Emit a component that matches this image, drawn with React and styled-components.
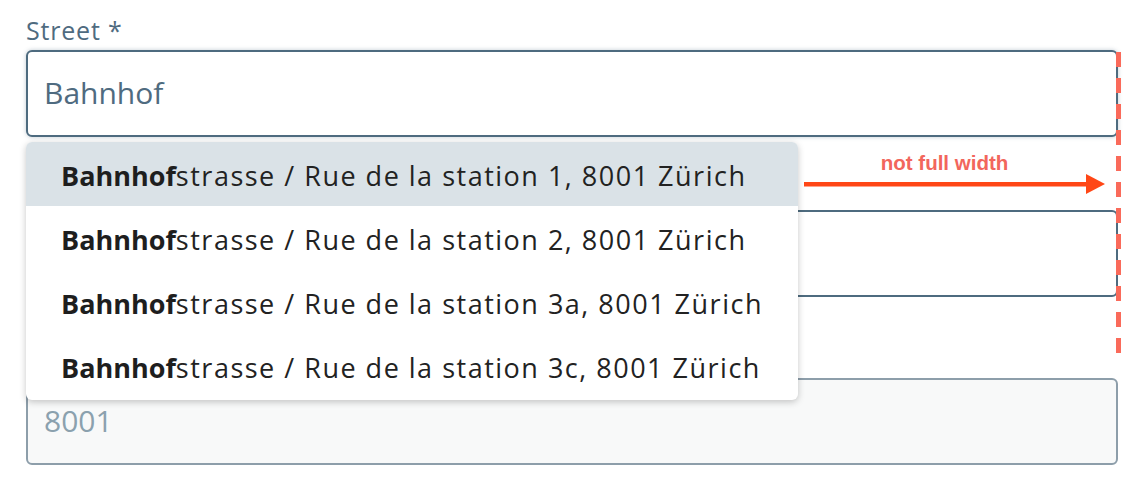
import React from "react"
import styled, { createGlobalStyle } from "styled-components"

const GlobalStyle = createGlobalStyle`
  html, body {
    margin: 0;
    padding: 0;
    background: #ffffff;
  }
  body {
    font-family: "Open Sans", Lato, sans-serif;
  }
`

const suggestions = [
  "strasse / Rue de la station 1, 8001 Zürich",
  "strasse / Rue de la station 2, 8001 Zürich",
  "strasse / Rue de la station 3a, 8001 Zürich",
  "strasse / Rue de la station 3c, 8001 Zürich",
]

const query = "Bahnhof"

const App = () => {
  return (
    <>
      <GlobalStyle />
      <Page>
        <Form>
          <Field>
            <Label>Street *</Label>
            <Input value={query} readOnly focused />
            <Dropdown>
              {suggestions.map((rest, i) => (
                <Option key={rest} active={i === 0}>
                  <b>{query}</b>
                  <span>{rest}</span>
                </Option>
              ))}
            </Dropdown>
          </Field>
          <Field space="73px">
            <Input value="" readOnly />
          </Field>
          <Field space="81px">
            <Input value="8001" readOnly disabled />
          </Field>
        </Form>

        <Note>
          <NoteText>not full width</NoteText>
          <Arrow>
            <svg width="301" height="20" viewBox="0 0 301 20">
              <rect x="0" y="8" width="284" height="4.5" fill="#ff4716" />
              <polygon points="282,0 301,10 282,20" fill="#ff4716" />
            </svg>
          </Arrow>
        </Note>
        <DashLine />
      </Page>
    </>
  )
}

export default App

const Page = styled.div`
  position: relative;
  width: 1142px;
  height: 504px;
  padding: 14px 24px 0 26px;
  box-sizing: border-box;
  overflow: hidden;
`

const Form = styled.form`
  display: flex;
  flex-direction: column;
  width: 1092px;
`

const Field = styled.div`
  position: relative;
  display: flex;
  flex-direction: column;
  margin-top: ${({ space }) => space || "0"};
`

const Label = styled.label`
  display: block;
  height: 36px;
  font-size: 25px;
  line-height: 32px;
  letter-spacing: 0.8px;
  color: #4f6b7f;
`

const Input = styled.input`
  box-sizing: border-box;
  width: 100%;
  height: 87px;
  padding: 0 16px 3px;
  border-radius: 6px;
  font-family: "Open Sans", Lato, sans-serif;
  font-size: 30px;
  outline: none;
  border: 2px solid ${({ disabled }) => (disabled ? "#8d9eaa" : "#4e6b7f")};
  background: ${({ disabled }) => (disabled ? "#f8f9f9" : "#ffffff")};
  color: ${({ disabled }) => (disabled ? "#8ba1ae" : "#4f6b80")};
  box-shadow: ${({ focused }) =>
    focused ? "0 0 4px rgba(78, 107, 127, 0.35)" : "none"};
  -webkit-text-fill-color: ${({ disabled }) =>
    disabled ? "#8ba1ae" : "#4f6b80"};
  opacity: 1;
`

const Dropdown = styled.ul`
  position: absolute;
  z-index: 10;
  top: calc(100% + 5px);
  left: 0;
  width: 772px;
  margin: 0;
  padding: 0 0 2px;
  list-style: none;
  background: #ffffff;
  border-radius: 6px;
  overflow: hidden;
  box-shadow: 0 2px 7px rgba(0, 0, 0, 0.22);
`

const Option = styled.li`
  display: flex;
  align-items: center;
  box-sizing: border-box;
  height: 64px;
  padding: 3px 35px 0;
  font-size: 27px;
  color: #222222;
  white-space: nowrap;
  background: ${({ active }) => (active ? "#dae2e7" : "transparent")};

  b {
    font-weight: 700;
    color: #1e1e1e;
  }

  span {
    letter-spacing: 1.5px;
  }
`

const Note = styled.div`
  position: absolute;
  top: 152px;
  left: 804px;
  width: 301px;
`

const NoteText = styled.div`
  font-family: "Liberation Sans", Arial, sans-serif;
  font-weight: 700;
  font-size: 20.5px;
  line-height: 22px;
  color: #f2665c;
  text-align: center;
  padding-right: 20px;
`

const Arrow = styled.div`
  display: flex;
  margin-top: 0;

  svg {
    display: block;
  }
`

const DashLine = styled.div`
  position: absolute;
  z-index: 20;
  top: 52px;
  left: 1116px;
  width: 5px;
  height: 311px;
  background: repeating-linear-gradient(
    to bottom,
    #fa6a5a 0,
    #fa6a5a 15px,
    transparent 15px,
    transparent 26px
  );
`
